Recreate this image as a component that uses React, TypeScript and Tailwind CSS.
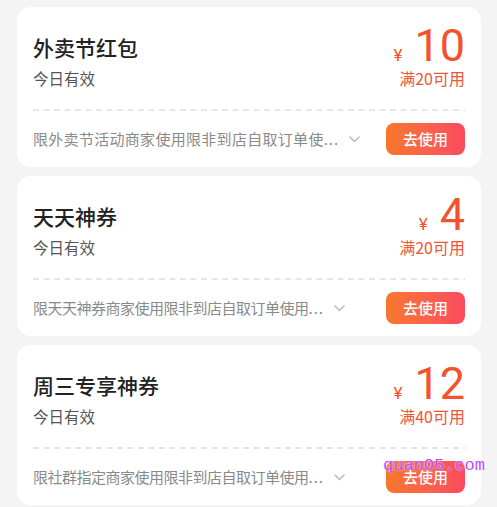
import * as React from "react";

type Coupon = {
  title: string;
  amount: string;
  threshold: string;
  desc: string;
  tight?: boolean;
};

const coupons: Coupon[] = [
  { title: "外卖节红包", amount: "10", threshold: "满20可用", desc: "限外卖节活动商家使用限非到店自取订单使" },
  { title: "天天神券", amount: "4", threshold: "满20可用", desc: "限天天神券商家使用限非到店自取订单使用", tight: true },
  { title: "周三专享神券", amount: "12", threshold: "满40可用", desc: "限社群指定商家使用限非到店自取订单使用", tight: true },
];

function Chevron() {
  return (
    <svg width="11" height="7" viewBox="0 0 11 7" className="ml-[10px] shrink-0">
      <polyline points="1,1 5.5,5.5 10,1" fill="none" stroke="#bdbdbd" strokeWidth="1.6" strokeLinecap="round" strokeLinejoin="round" />
    </svg>
  );
}

function CouponCard({ coupon, watermark }: { coupon: Coupon; watermark?: boolean }) {
  return (
    <div className="relative bg-white rounded-[14px] px-4 pt-4 pb-3">
      {/* top: title + amount */}
      <div className="flex items-end justify-between h-[65px]">
        <div className="flex flex-col">
          <div className="text-[21px] leading-[28px] font-medium text-[#222]">{coupon.title}</div>
          <div className="mt-[7px] text-[15.5px] leading-[20px] text-[#555]">今日有效</div>
        </div>
        <div className="flex flex-col items-end">
          <div className="flex items-baseline h-[45px] text-[#f4522d] font-['Roboto',sans-serif]">
            <span className="text-[17px] leading-none mr-[12px]">¥</span>
            <span className="text-[45px] leading-[45px]">{coupon.amount}</span>
          </div>
          <div className="text-[16px] leading-[20px] text-[#ee5636]">{coupon.threshold}</div>
        </div>
      </div>

      {/* dashed divider */}
      <svg className="mt-[21px] block w-full" height="2">
        <line x1="0" y1="1" x2="100%" y2="1" stroke="#dedede" strokeWidth="1.5" strokeDasharray="6 4.5" />
      </svg>

      {/* bottom: desc + button */}
      <div className="mt-3 flex items-center justify-between">
        <div className="flex items-center text-[15px] text-[#8a8a8a]">
          <span className={coupon.tight ? "tracking-[-0.5px]" : "tracking-[0.3px]"}>{coupon.desc}</span>
          <span className="tracking-[1px]">...</span>
          <Chevron />
        </div>
        <button className="w-[79px] h-8 rounded-[8px] bg-gradient-to-r from-[#f7772b] to-[#fb4a5f] text-white text-[15px] font-medium">
          去使用
        </button>
      </div>

      {watermark && (
        <div className="absolute left-[366px] top-[112px] text-[17px] leading-none text-[#b84cff] font-['Liberation_Mono',monospace] [text-shadow:0_0_2px_#fff]">
          quan05.com
        </div>
      )}
    </div>
  );
}

export default function App() {
  return (
    <div className="min-h-[507px] bg-[#f4f4f4] pt-[7px] pl-[17px] pr-4 flex flex-col gap-[9px] font-['Noto_Sans_CJK_SC','Noto_Sans',sans-serif]">
      {coupons.map((c, i) => (
        <CouponCard key={c.title} coupon={c} watermark={i === 2} />
      ))}
    </div>
  );
}
